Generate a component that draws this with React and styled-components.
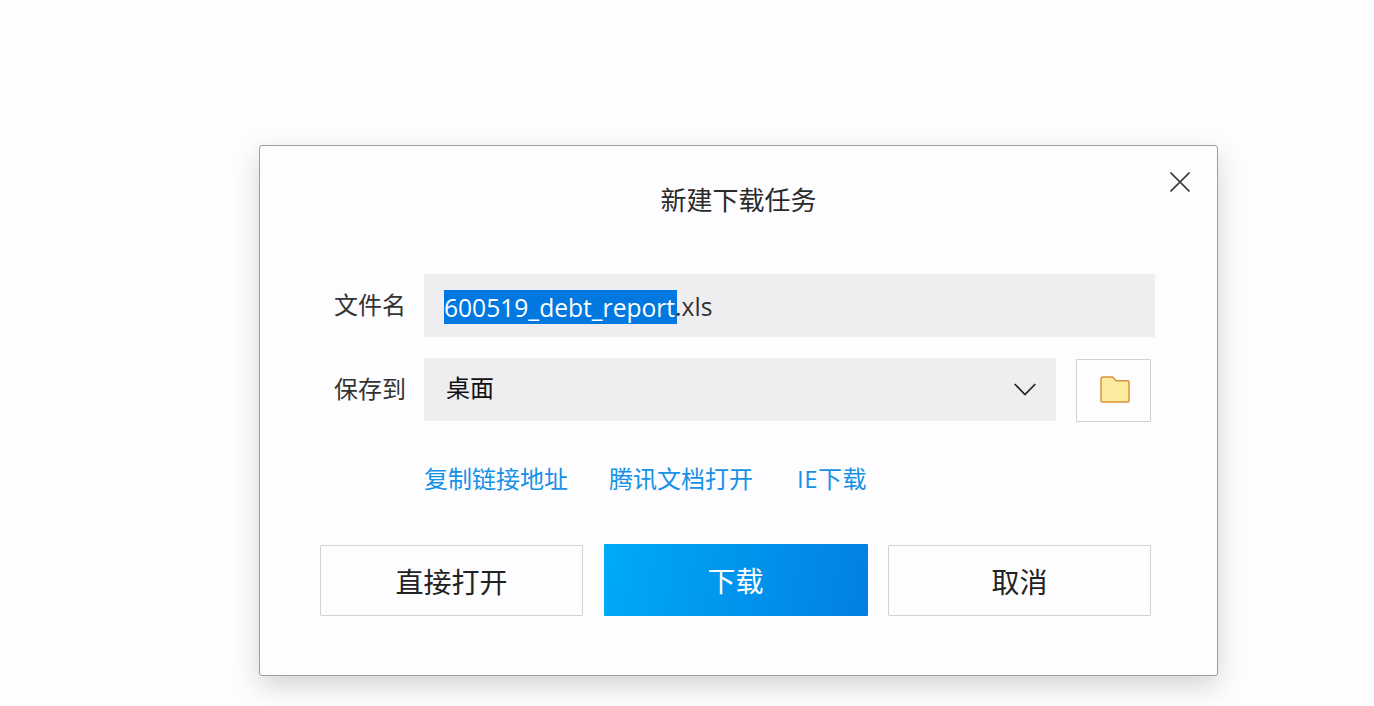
import React from 'react'
import styled, { createGlobalStyle } from 'styled-components'

const GlobalStyle = createGlobalStyle`
html, body {
  margin: 0;
  padding: 0;
  background: #fdfdfe;
  overflow: hidden;
}
body {
  font-family: "Open Sans", "Noto Sans CJK SC", sans-serif;
  color: #222;
}
`

const Page = styled.div`
height: 706px;
padding: 145px 0 0 259px;
box-sizing: border-box;
`

const Dialog = styled.div`
position: relative;
box-sizing: border-box;
width: 959px;
height: 531px;
padding: 0 61px 0 60px;
background: #fdfcfe;
border: 1px solid #9d9d9f;
border-radius: 3px;
box-shadow: 0 10px 26px rgba(0, 0, 0, 0.16);
`

const Title = styled.div`
height: 128px;
padding-top: 32px;
box-sizing: border-box;
text-align: center;
font-size: 26px;
line-height: 44px;
margin-right: -1px;
color: #2a2a2a;
`

const CloseBtn = styled.button`
position: absolute;
top: 26px;
right: 27px;
width: 20px;
height: 20px;
padding: 0;
border: 0;
background: none;
display: flex;
`

const Row = styled.div`
display: flex;
align-items: flex-start;
height: 63px;
margin-bottom: 21px;
`

const Label = styled.div`
width: 104px;
box-sizing: border-box;
padding-left: 14px;
font-size: 24px;
line-height: 63px;
color: #333;
margin-top: -1px;
flex-shrink: 0;
`

const Field = styled.div`
display: flex;
align-items: center;
justify-content: space-between;
box-sizing: border-box;
height: 63px;
width: ${p => p.$w}px;
padding: 0 20px;
background: #eeeef0;
font-size: 24px;
color: #222;
`

const Selected = styled.span`
background: #0078e0;
color: #fff;
height: 34px;
line-height: 36px;
padding-right: 2px;
margin-right: -2px;
display: inline-block;
`

const FileName = styled.div`
display: flex;
align-items: center;
font-size: 24.6px;
line-height: 36px;
margin-top: 2px;
color: #333;
`

const SelectText = styled.span`
margin-left: 2px;
color: #111;
margin-top: -6px;
`

const FolderBtn = styled.button`
width: 75px;
height: 63px;
margin: 1px 0 0 20px;
padding: 0 0 2px 2px;
border: 1px solid #d0d0d2;
border-radius: 1px;
background: #fdfcfe;
display: flex;
align-items: center;
justify-content: center;
flex-shrink: 0;
`

const Links = styled.div`
display: flex;
gap: 41px;
margin: 36px 0 0 104px;
height: 44px;
line-height: 44px;
font-size: 24px;
color: #1592e6;
`

const LinkText = styled.a`
white-space: nowrap;
`

const IeLink = styled(LinkText)`
margin-left: 3px;
letter-spacing: 0.5px;
`

const Actions = styled.div`
display: flex;
justify-content: space-between;
margin: 44px 5px 0 0;
`

const ActionBtn = styled.button`
box-sizing: border-box;
width: ${p => p.$primary ? 264 : 263}px;
height: ${p => p.$primary ? 72 : 71}px;
margin-top: ${p => p.$primary ? -1 : 0}px;
border: ${p => p.$primary ? '0' : '1px solid #d2d2d4'};
border-radius: 1px;
padding: 0;
font-family: inherit;
font-size: 28px;
color: ${p => p.$primary ? '#fff' : '#222'};
background: ${p => p.$primary ? 'linear-gradient(100deg, #00aaf9 0%, #0280e2 100%)' : '#fdfcfe'};
`

export default function App() {
  return (
    <>
      <GlobalStyle />
      <Page>
        <Dialog>
          <Title>新建下载任务</Title>
          <CloseBtn aria-label="关闭">
            <svg width="20" height="20" viewBox="0 0 20 20">
              <path d="M0.5 0.5 L19.5 19.5 M19.5 0.5 L0.5 19.5" stroke="#3c3c3e" strokeWidth="1.6" fill="none" />
            </svg>
          </CloseBtn>
          <Row>
            <Label>文件名</Label>
            <Field $w={731}>
              <FileName><Selected>600519_debt_report</Selected>.xls</FileName>
            </Field>
          </Row>
          <Row>
            <Label>保存到</Label>
            <Field $w={632}>
              <SelectText>桌面</SelectText>
              <svg width="22" height="13" viewBox="0 0 22 13">
                <path d="M0.7 1 L11 11.5 L21.3 1" stroke="#222" strokeWidth="1.7" fill="none" />
              </svg>
            </Field>
            <FolderBtn aria-label="选择文件夹">
              <svg width="30" height="27" viewBox="0 0 30 27">
                <path d="M1 3 Q1 1 3 1 H12.5 L16 4.8 H28 Q29 4.8 29 6 V25 Q29 26 28 26 H2 Q1 26 1 25 Z" fill="#fdec9f" stroke="#d9933a" strokeWidth="1.5" />
              </svg>
            </FolderBtn>
          </Row>
          <Links>
            <LinkText>复制链接地址</LinkText>
            <LinkText>腾讯文档打开</LinkText>
            <IeLink>IE下载</IeLink>
          </Links>
          <Actions>
            <ActionBtn>直接打开</ActionBtn>
            <ActionBtn $primary>下载</ActionBtn>
            <ActionBtn>取消</ActionBtn>
          </Actions>
        </Dialog>
      </Page>
    </>
  )
}
